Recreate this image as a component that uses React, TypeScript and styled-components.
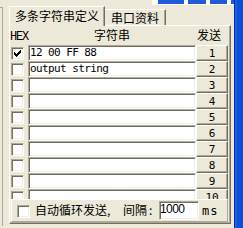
import styled, { createGlobalStyle } from 'styled-components'

const face = '#ece9d8'
const shadow = '#aca899'
const dark = '#716f64'
const light = '#f1efe2'

const GlobalStyle = createGlobalStyle`
  html, body {
    margin: 0;
    padding: 0;
    background: ${face};
  }
  body {
    width: 243px;
    height: 228px;
    overflow: hidden;
    font-family: "Noto Sans CJK SC", sans-serif;
    color: #000;
  }
`

const Window = styled.div`
  display: flex;
  width: 243px;
  height: 228px;
  background: ${face};
  overflow: hidden;
`

const Client = styled.div`
  width: 234px;
  display: flex;
  flex-direction: column;
`

const TopStrip = styled.div`
  display: flex;
  align-items: flex-start;
  gap: 4px;
  height: 5px;
  margin-left: 152px;
  padding-left: 6px;
  background: #fff;
`

const TitleBit = styled.div<{ $w: number }>`
  width: ${(p) => p.$w}px;
  height: 4px;
  background: #1f5bd8;
`

const Body = styled.div`
  display: flex;
  padding-top: 1px;
`

const LeftStub = styled.div`
  width: 2px;
  height: 218px;
  margin-top: 1px;
  border-top: 1px solid ${shadow};
  border-right: 1px solid ${shadow};
`

const TabControl = styled.div`
  display: flex;
  flex-direction: column;
  width: 222px;
  margin-left: 6px;
`

const TabRow = styled.div`
  display: flex;
  align-items: flex-end;
  height: 19px;
`

const Tab = styled.div<{ $selected?: boolean }>`
  box-sizing: border-box;
  display: flex;
  justify-content: center;
  width: ${(p) => (p.$selected ? 96 : 61)}px;
  height: ${(p) => (p.$selected ? 20 : 16)}px;
  margin-bottom: ${(p) => (p.$selected ? -1 : 0)}px;
  padding-top: ${(p) => (p.$selected ? 3 : 2)}px;
  z-index: ${(p) => (p.$selected ? 1 : 0)};
  background: ${face};
  border-top: 1px solid #fff;
  border-left: ${(p) => (p.$selected ? '1px solid #fff' : 'none')};
  border-right: 1px solid ${dark};
  box-shadow: inset -1px 0 0 ${shadow};
  font-size: 12px;
  line-height: 12px;
  white-space: nowrap;
`

const Panel = styled.div`
  box-sizing: border-box;
  display: flex;
  flex-direction: column;
  height: 199px;
  border-top: 1px solid #fff;
  border-left: 1px solid #fff;
  border-right: 1px solid ${dark};
  border-bottom: 1px solid ${dark};
  box-shadow: inset -1px -1px 0 ${shadow};
`

const Header = styled.div`
  box-sizing: border-box;
  display: grid;
  grid-template-columns: 18px 168px 32px;
  align-items: end;
  height: 19px;
  padding-bottom: 4px;
  font-size: 12px;
  line-height: 12px;
`

const HexLabel = styled.span`
  margin-bottom: -2px;
  font-family: "Liberation Mono", monospace;
  font-size: 12px;
  letter-spacing: -1.2px;
  line-height: 12px;
`

const HeadCell = styled.span<{ $align?: string }>`
  justify-self: ${(p) => p.$align || 'center'};
  padding-left: ${(p) => (p.$align === 'start' ? 1 : 0)}px;
  white-space: nowrap;
`

const List = styled.div`
  height: 154px;
  overflow: hidden;
  flex-shrink: 0;
`

const Row = styled.div`
  display: flex;
  align-items: flex-start;
  height: 16px;
  padding-left: 1px;
`

const Box = styled.span<{ $top: number }>`
  box-sizing: border-box;
  display: block;
  flex-shrink: 0;
  width: 13px;
  height: 13px;
  margin-top: ${(p) => p.$top}px;
  padding: 2px;
  background: #fff;
  border-top: 1px solid ${shadow};
  border-left: 1px solid ${shadow};
  border-bottom: 1px solid #fff;
  border-right: 1px solid #fff;
  box-shadow: inset 1px 1px 0 ${dark}, inset -1px -1px 0 ${light};

  svg {
    display: block;
  }
`

const Field = styled.div`
  box-sizing: border-box;
  width: 168px;
  height: 16px;
  margin-left: 4px;
  padding-left: 1px;
  background: #fff;
  border-top: 1px solid ${shadow};
  border-left: 1px solid ${shadow};
  border-bottom: 1px solid #fff;
  border-right: 1px solid #fff;
  box-shadow: inset 1px 1px 0 ${dark}, inset -1px -1px 0 ${light};
  padding-top: 1px;
  font-family: "DejaVu Sans Mono", monospace;
  font-size: 11px;
  letter-spacing: -0.6px;
  line-height: 12px;
  white-space: pre;
  overflow: hidden;
`

const SendButton = styled.div`
  box-sizing: border-box;
  width: 32px;
  height: 16px;
  padding-top: 1px;
  text-align: center;
  background: ${face};
  border-top: 1px solid #fff;
  border-left: 1px solid #fff;
  border-bottom: 1px solid ${dark};
  border-right: 1px solid ${dark};
  box-shadow: inset -1px -1px 0 ${shadow};
  font-family: "DejaVu Sans Mono", monospace;
  font-size: 11px;
  line-height: 13px;
`

const AutoBar = styled.div`
  box-sizing: border-box;
  display: flex;
  align-items: flex-start;
  width: 217px;
  height: 23px;
  margin-left: 1px;
  padding-left: 5px;
  flex-shrink: 0;
  border-top: 1px solid #fff;
  border-left: 1px solid #fff;
  border-bottom: 1px solid ${shadow};
  border-right: 1px solid ${shadow};
`

const BarLabel = styled.span<{ $w: number; $gap?: number }>`
  width: ${(p) => p.$w}px;
  margin-left: ${(p) => p.$gap || 0}px;
  margin-top: 4px;
  font-size: 12px;
  line-height: 12px;
  white-space: pre;
`

const Colon = styled.span`
  margin-left: 2px;
`

const IntervalField = styled.div`
  box-sizing: border-box;
  width: 40px;
  height: 19px;
  margin-top: 1px;
  padding-top: 1px;
  background: #fff;
  border-top: 1px solid ${shadow};
  border-left: 1px solid ${shadow};
  border-bottom: 1px solid #fff;
  border-right: 1px solid #fff;
  box-shadow: inset 1px 1px 0 ${dark}, inset -1px -1px 0 ${light};
  font-family: "Liberation Sans", sans-serif;
  font-size: 12px;
  letter-spacing: -0.6px;
  line-height: 12px;
`

const Unit = styled.span`
  margin-left: 3px;
  margin-top: 5px;
  font-family: "DejaVu Sans Mono", monospace;
  font-size: 12px;
  letter-spacing: 1px;
  line-height: 12px;
`

const Frame = styled.div`
  width: 9px;
  height: 228px;
  background: linear-gradient(
    to right,
    #0a2a9e 0,
    #0a2a9e 1px,
    #1a5ee8 1px,
    #1a5ee8 3px,
    #0c4fd8 3px
  );
`

function CheckBox({ checked, top }: { checked?: boolean; top: number }) {
  return (
    <Box $top={top}>
      {checked && (
        <svg width="7" height="7" viewBox="0 0 7 7" shapeRendering="crispEdges">
          <path
            fill="#000"
            d="M6 0h1v1h-1z M5 1h2v1h-2z M0 2h1v1h-1z M4 2h3v1h-3z M0 3h2v1h-2z M3 3h3v1h-3z M0 4h5v1h-5z M1 5h3v1h-3z M2 6h1v1h-1z"
          />
        </svg>
      )}
    </Box>
  )
}

const rows = [
  { hex: true, text: '12 00 FF 88' },
  { hex: false, text: 'output string' },
  ...Array.from({ length: 8 }, () => ({ hex: false, text: '' })),
]

export default function App() {
  return (
    <>
      <GlobalStyle />
      <Window>
        <Client>
          <TopStrip>
            <TitleBit $w={26} />
            <TitleBit $w={18} />
            <TitleBit $w={17} />
            <TitleBit $w={3} />
          </TopStrip>
          <Body>
            <LeftStub />
            <TabControl>
              <TabRow>
                <Tab $selected>多条字符串定义</Tab>
                <Tab>串口资料</Tab>
              </TabRow>
              <Panel>
                <Header>
                  <HexLabel>HEX</HexLabel>
                  <HeadCell>字符串</HeadCell>
                  <HeadCell $align="start">发送</HeadCell>
                </Header>
                <List>
                  {rows.map((row, i) => (
                    <Row key={i}>
                      <CheckBox checked={row.hex} top={2} />
                      <Field>{row.text}</Field>
                      <SendButton>{i + 1}</SendButton>
                    </Row>
                  ))}
                </List>
                <AutoBar>
                  <CheckBox top={5} />
                  <BarLabel $w={88} $gap={5}>
                    自动循环发送,
                  </BarLabel>
                  <BarLabel $w={36}>
                    间隔<Colon>:</Colon>
                  </BarLabel>
                  <IntervalField>1000</IntervalField>
                  <Unit>ms</Unit>
                </AutoBar>
              </Panel>
            </TabControl>
          </Body>
        </Client>
        <Frame />
      </Window>
    </>
  )
}
